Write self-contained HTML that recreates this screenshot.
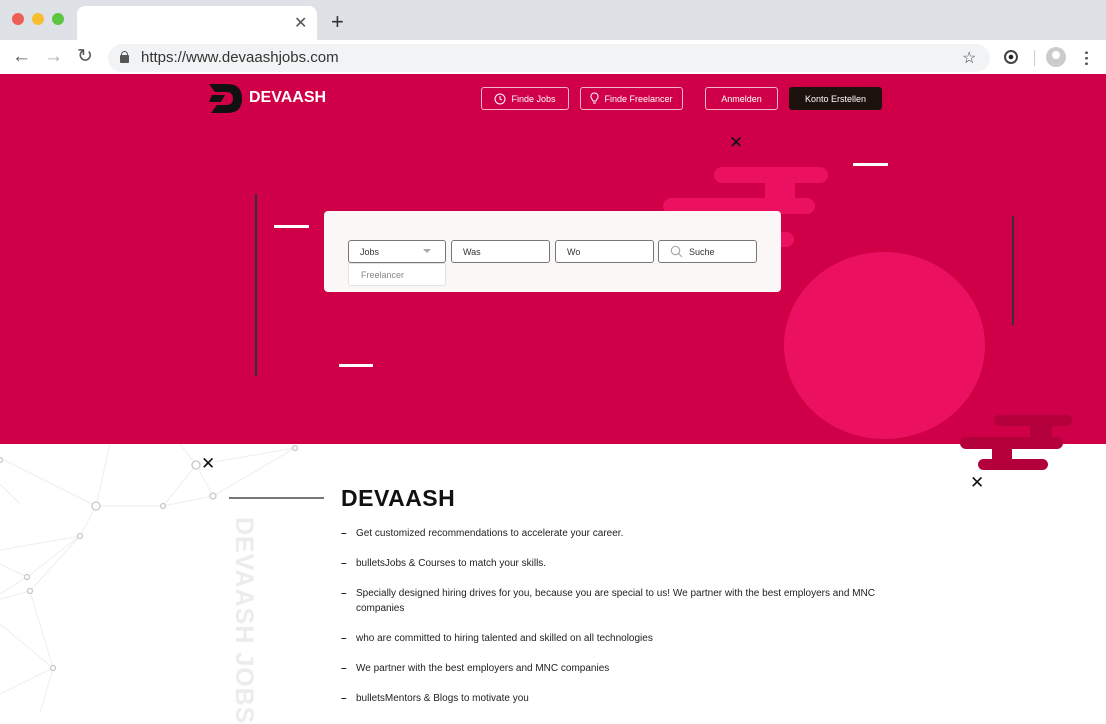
<!DOCTYPE html>
<html><head><meta charset="utf-8"><style>
*{margin:0;padding:0;box-sizing:border-box}
body{width:1106px;height:713px;overflow:hidden;font-family:"Liberation Sans",sans-serif;background:#fff;position:relative}
.abs{position:absolute}
.btn{position:absolute;top:87px;height:23px;border:1px solid #f3b6c9;border-radius:3px;color:#fff;font-size:9px;display:flex;align-items:center;justify-content:center;gap:5px}
.inp{position:absolute;top:240px;height:23px;border:1px solid #777;border-radius:3px;background:#fff;font-size:9px;color:#333;display:flex;align-items:center;padding-left:11px}
.li{position:absolute;left:341px;font-size:10px;color:#222;line-height:15px;width:560px}
.li b{position:absolute;left:0;font-weight:bold}
.li span{display:block;margin-left:15px}
.bar{position:absolute;border-radius:8px}
</style></head><body>
<!-- chrome -->
<div class="abs" style="left:0;top:0;width:1106px;height:40px;background:#dee1e6"></div>
<div class="abs" style="left:12px;top:13px;width:12px;height:12px;border-radius:50%;background:#ed5f56"></div>
<div class="abs" style="left:32px;top:13px;width:12px;height:12px;border-radius:50%;background:#f5bd2f"></div>
<div class="abs" style="left:52px;top:13px;width:12px;height:12px;border-radius:50%;background:#5dc641"></div>
<div class="abs" style="left:77px;top:6px;width:240px;height:36px;background:#fff;border-radius:8px 8px 0 0"></div>
<div class="abs" style="left:294px;top:13px;font-size:16px;color:#555">✕</div>
<div class="abs" style="left:331px;top:9px;font-size:22px;color:#333">+</div>
<div class="abs" style="left:0;top:40px;width:1106px;height:34px;background:#fff"></div>
<div class="abs" style="left:12px;top:46px;font-size:19px;color:#555">←</div>
<div class="abs" style="left:44px;top:46px;font-size:19px;color:#aaa">→</div>
<div class="abs" style="left:77px;top:45px;font-size:19px;color:#555">↻</div>
<div class="abs" style="left:108px;top:44px;width:882px;height:28px;background:#f1f3f4;border-radius:14px"></div>
<div class="abs" style="left:120px;top:55px;width:9px;height:8px;background:#555;border-radius:1px"></div>
<div class="abs" style="left:121px;top:51px;width:7px;height:7px;border:1.5px solid #555;border-radius:4px 4px 0 0"></div>
<div class="abs" style="left:141px;top:49px;font-size:15px;color:#333">https://www.devaashjobs.com</div>
<div class="abs" style="left:962px;top:48px;font-size:16px;color:#444">☆</div>
<div class="abs" style="left:1004px;top:50px;width:14px;height:14px;border-radius:50%;border:2px solid #444;background:radial-gradient(#222 30%,#fff 35%)"></div>
<div class="abs" style="left:1034px;top:50px;width:1px;height:16px;background:#ccc"></div>
<div class="abs" style="left:1046px;top:47px;width:20px;height:20px;border-radius:50%;background:#ccc"></div>
<div class="abs" style="left:1052px;top:51px;width:8px;height:8px;border-radius:50%;background:#fff"></div>
<div class="abs" style="left:1085px;top:50px;width:3px;height:16px;background:radial-gradient(circle,#555 1.3px,transparent 1.5px) 0 0/3px 5.5px"></div>
<!-- hero -->
<div class="abs" style="left:0;top:74px;width:1106px;height:370px;background:#cf0048;overflow:hidden">
 <div class="bar" style="left:714px;top:93px;width:114px;height:16px;background:#ec1160"></div>
 <div class="abs" style="left:765px;top:105px;width:30px;height:22px;background:#ec1160"></div>
 <div class="bar" style="left:663px;top:124px;width:152px;height:16px;background:#ec1160"></div>
 <div class="bar" style="left:760px;top:158px;width:34px;height:15px;background:#ec1160"></div>
 <div class="abs" style="left:784px;top:178px;width:201px;height:187px;border-radius:50%;background:#ec1160"></div>
 <div class="abs" style="left:853px;top:89px;width:35px;height:3px;background:#fff"></div>
 <div class="abs" style="left:274px;top:151px;width:35px;height:3px;background:#fff"></div>
 <div class="abs" style="left:339px;top:290px;width:34px;height:3px;background:#fff"></div>
 <div class="abs" style="left:255px;top:120px;width:2px;height:182px;background:#333"></div>
 <div class="abs" style="left:1012px;top:142px;width:2px;height:109px;background:#333"></div>
 <div class="abs" style="left:729px;top:60px;font-size:17px;color:#111;line-height:17px">✕</div>
</div>
<!-- dark cloud -->
<div class="bar" style="left:994px;top:415px;width:78px;height:11px;background:#b3003a"></div>
<div class="abs" style="left:1030px;top:424px;width:22px;height:15px;background:#b3003a"></div>
<div class="bar" style="left:960px;top:437px;width:103px;height:12px;background:#b3003a"></div>
<div class="abs" style="left:992px;top:447px;width:20px;height:14px;background:#b3003a"></div>
<div class="bar" style="left:978px;top:459px;width:70px;height:11px;background:#b3003a"></div>
<div class="abs" style="left:970px;top:474px;font-size:17px;color:#111;line-height:17px">✕</div>
<!-- nav -->
<svg class="abs" style="left:209px;top:84px" width="34" height="29" viewBox="0 0 34 29"><path d="M0 0H18Q33 0 33 14.5Q33 29 18 29H2L8 21H17Q24 21 24 14.5Q24 8 17 8H6Z" fill="#111"/><path d="M3 11H16L12 18H0Z" fill="#111"/></svg>
<div class="abs" style="left:249px;top:89px;font-size:16px;font-weight:bold;color:#fff">DEVAASH</div>
<div class="btn" style="left:481px;width:88px"><svg width="12" height="12"><circle cx="6" cy="6" r="5" fill="none" stroke="#fff"/><path d="M6 3V6L8 7" stroke="#fff" fill="none"/></svg>Finde Jobs</div>
<div class="btn" style="left:580px;width:103px"><svg width="9" height="13"><path d="M4.5 1A3.5 3.5 0 0 1 7 7L6 9H3L2 7A3.5 3.5 0 0 1 4.5 1ZM3 11H6" stroke="#fff" fill="none"/></svg>Finde Freelancer</div>
<div class="btn" style="left:705px;width:73px">Anmelden</div>
<div class="btn" style="left:789px;width:93px;background:#1e120e;border-color:#1e120e">Konto Erstellen</div>
<!-- search card -->
<div class="abs" style="left:324px;top:211px;width:457px;height:81px;background:#fcf7f7;border-radius:4px"></div>
<div class="inp" style="left:348px;width:98px">Jobs<span style="position:absolute;right:14px;top:8px;border:4px solid transparent;border-top:4px solid #aaa"></span></div>
<div class="abs" style="left:348px;top:263px;width:98px;height:23px;background:#fff;border:1px solid #e3e3e3;border-radius:0 0 3px 3px;font-size:9px;color:#888;padding:6px 0 0 12px">Freelancer</div>
<div class="inp" style="left:451px;width:99px">Was</div>
<div class="inp" style="left:555px;width:99px">Wo</div>
<div class="inp" style="left:658px;width:99px"><svg width="13" height="13" style="margin-right:6px"><circle cx="5.5" cy="5.5" r="4.2" fill="none" stroke="#aaa" stroke-width="1.2"/><path d="M8.6 8.6L12 12" stroke="#aaa" stroke-width="1.2"/></svg>Suche</div>
<!-- network -->
<svg class="abs" style="left:0;top:444px" width="340" height="269">
<g stroke="#eee" stroke-width="1" fill="none">
<path d="M0 14L96 62L163 62L213 52L295 4M213 52L196 21L163 62M196 21L295 4M196 21L180 0M96 62L80 92L0 106M80 92L27 133L0 150M80 92L30 147L0 155M30 147L53 224L0 250M27 133L0 120M53 224L40 269M96 62L110 0M0 180L53 224M0 40L20 60"/>
</g>
<g fill="#fff" stroke="#c8c8c8" stroke-width="1.3">
<circle cx="96" cy="62" r="4"/><circle cx="163" cy="62" r="2.5"/><circle cx="213" cy="52" r="3"/><circle cx="196" cy="21" r="4"/><circle cx="295" cy="4" r="2.5"/><circle cx="80" cy="92" r="2.5"/><circle cx="27" cy="133" r="2.5"/><circle cx="30" cy="147" r="2.5"/><circle cx="53" cy="224" r="2.5"/><circle cx="0" cy="16" r="2.5"/>
</g></svg>
<div class="abs" style="left:201px;top:455px;font-size:17px;color:#111;line-height:17px">✕</div>
<div class="abs" style="left:229px;top:497px;width:95px;height:1.5px;background:#777"></div>
<div class="abs" style="left:258px;top:517px;transform-origin:0 0;transform:rotate(90deg);font-size:25px;font-weight:bold;color:#ececec;white-space:nowrap;letter-spacing:1px">DEVAASH JOBS</div>
<!-- content -->
<div class="abs" style="left:341px;top:485px;font-size:23px;font-weight:bold;color:#111;letter-spacing:.5px">DEVAASH</div>
<div class="li" style="top:526px"><b>–</b><span>Get customized recommendations to accelerate your career.</span></div>
<div class="li" style="top:556px"><b>–</b><span>bulletsJobs &amp; Courses to match your skills.</span></div>
<div class="li" style="top:586px"><b>–</b><span>Specially designed hiring drives for you, because you are special to us! We partner with the best employers and MNC companies</span></div>
<div class="li" style="top:631px"><b>–</b><span>who are committed to hiring talented and skilled on all technologies</span></div>
<div class="li" style="top:661px"><b>–</b><span>We partner with the best employers and MNC companies</span></div>
<div class="li" style="top:691px"><b>–</b><span>bulletsMentors &amp; Blogs to motivate you</span></div>
</body></html>
